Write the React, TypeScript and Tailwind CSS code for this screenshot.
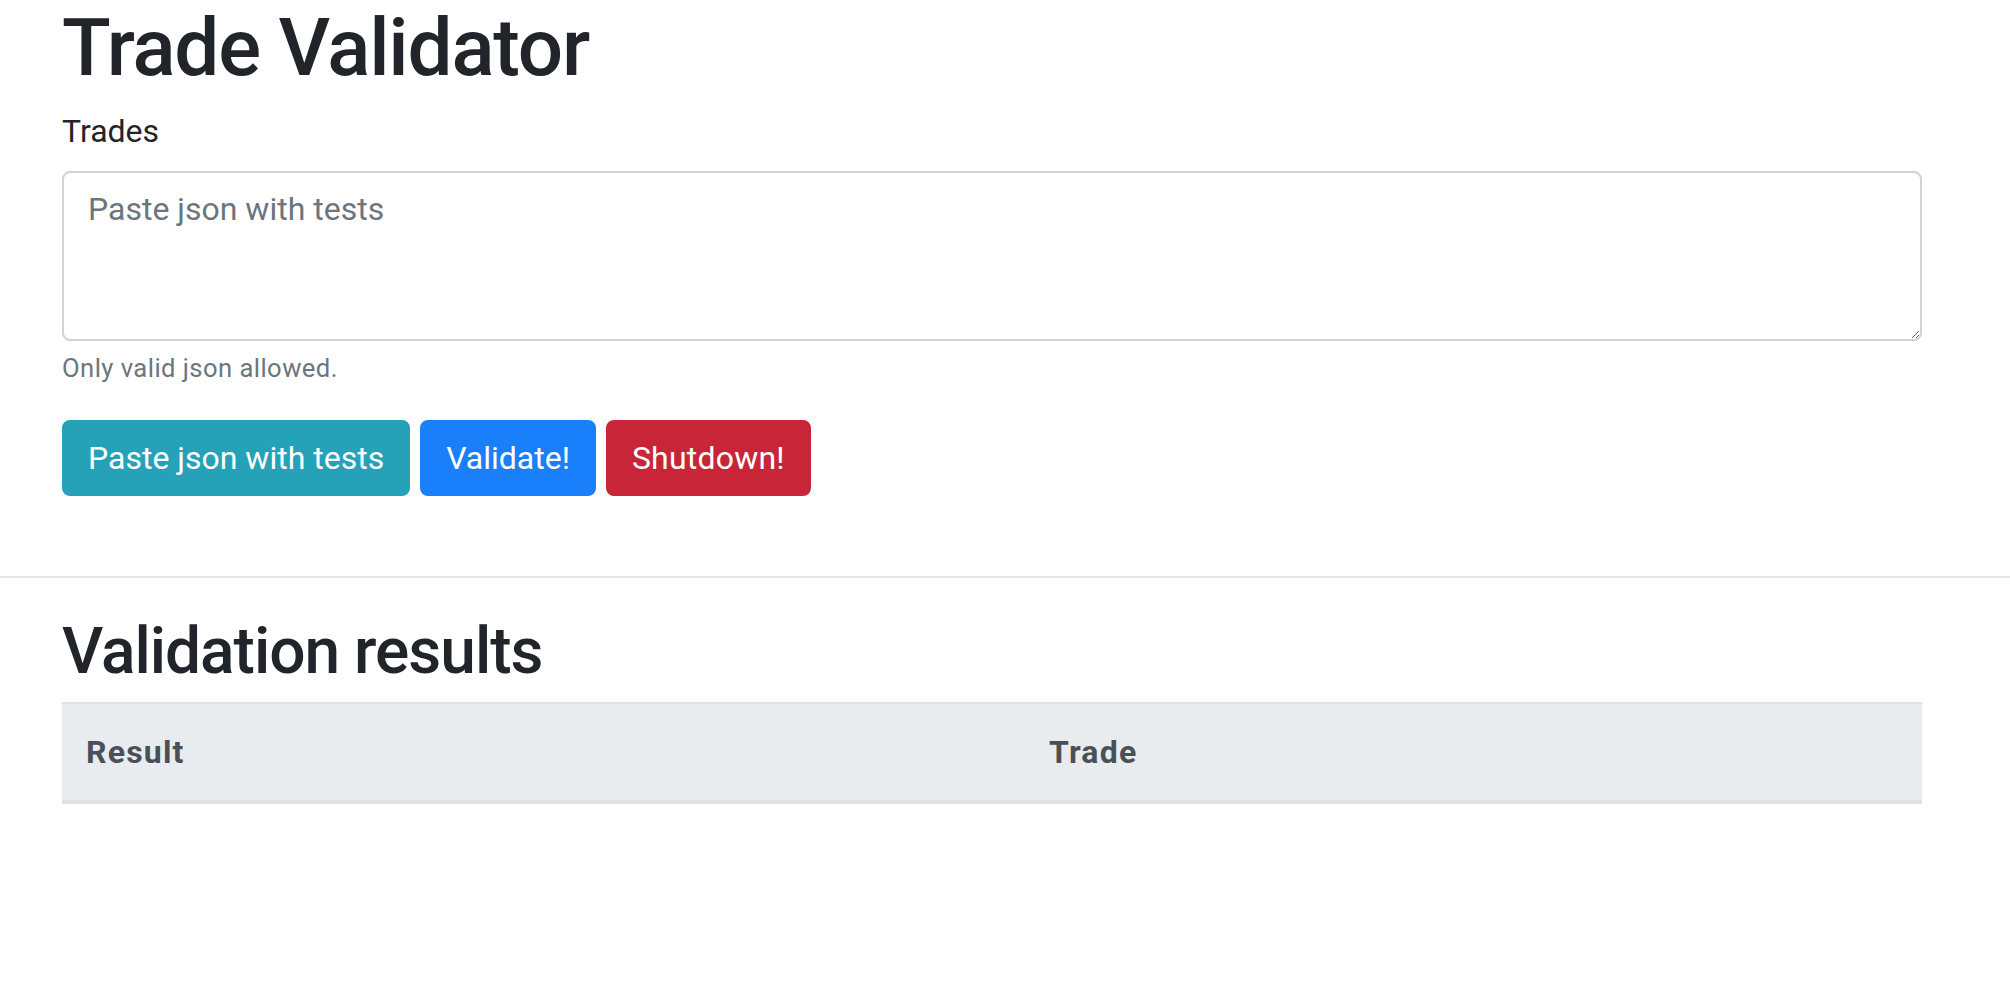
import React from "react";

export default function App() {
  return (
    <div className="min-h-screen bg-white text-[#212529] font-['Roboto','Liberation_Sans',sans-serif]">
      <div className="w-[1922px] pl-[62px]">
        <h1 className="m-0 mb-[11px] text-[80px] leading-[96px] font-medium tracking-[-1.2px]">
          Trade Validator
        </h1>
        <div className="mb-[33px]">
          <label className="block mb-[16px] text-[32px] leading-[48px]">Trades</label>
          <textarea
            rows={3}
            placeholder="Paste json with tests"
            className="block w-full h-[170px] border-2 border-[#ced4da] rounded-[8px] px-[24px] py-[12px] text-[32px] leading-[48px] text-[#495057] placeholder:text-[#6c757d] resize-y outline-none"
          />
          <small className="block mt-[8px] text-[25.6px] leading-[38px] tracking-[0.45px] text-[#6c757d]">
            Only valid json allowed.
          </small>
        </div>
        <div className="flex gap-[10px]">
          <button className="h-[76px] px-[24px] rounded-[8px] border-2 border-[#26a2b8] bg-[#26a2b8] text-white text-[32px] leading-[48px]">
            Paste json with tests
          </button>
          <button className="h-[76px] px-[24px] rounded-[8px] border-2 border-[#1a7ffb] bg-[#1a7ffb] text-white text-[32px] leading-[48px]">
            Validate!
          </button>
          <button className="h-[76px] px-[24px] rounded-[8px] border-2 border-[#c82539] bg-[#c82539] text-white text-[32px] leading-[48px] tracking-[0.2px]">
            Shutdown!
          </button>
        </div>
      </div>
      <hr className="mt-[80px] mb-[35px] border-0 border-t-2 border-[#e5e5e5]" />
      <div className="w-[1922px] pl-[62px]">
        <h2 className="m-0 mb-[12px] text-[64px] leading-[77px] font-medium tracking-[-1px]">
          Validation results
        </h2>
        <table className="w-full border-collapse">
          <thead>
            <tr className="bg-[#e9ecef] text-[#495057]">
              <th className="w-[963px] text-left font-bold text-[32px] leading-[48px] tracking-[1.2px] p-[24px] border-t-2 border-b-4 border-[#dee2e6]">
                Result
              </th>
              <th className="text-left font-bold text-[32px] leading-[48px] tracking-[1.2px] p-[24px] border-t-2 border-b-4 border-[#dee2e6]">
                Trade
              </th>
            </tr>
          </thead>
          <tbody></tbody>
        </table>
      </div>
    </div>
  );
}
